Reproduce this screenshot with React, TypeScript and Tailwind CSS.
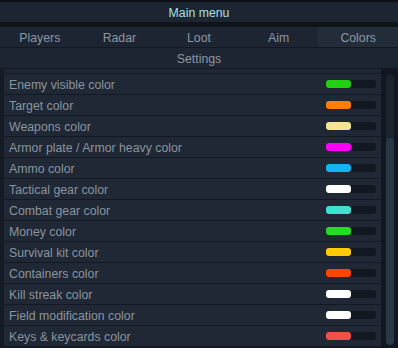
import React from "react";

const tabs = ["Players", "Radar", "Loot", "Aim", "Colors"];

const rows: { label: string; color: string }[] = [
  { label: "", color: "#ff2020" },
  { label: "Enemy visible color", color: "#22d012" },
  { label: "Target color", color: "#ff7f00" },
  { label: "Weapons color", color: "#f3e496" },
  { label: "Armor plate / Armor heavy color", color: "#ff00ff" },
  { label: "Ammo color", color: "#12b4f4" },
  { label: "Tactical gear color", color: "#ffffff" },
  { label: "Combat gear color", color: "#40e0d0" },
  { label: "Money color", color: "#1fe01f" },
  { label: "Survival kit color", color: "#ffcc00" },
  { label: "Containers color", color: "#ff4500" },
  { label: "Kill streak color", color: "#ffffff" },
  { label: "Field modification color", color: "#ffffff" },
  { label: "Keys & keycards color", color: "#ef5048" },
];

export default function App() {
  return (
    <div
      className="w-[398px] h-[348px] overflow-hidden bg-[#0c1016] pt-[2px] flex flex-col text-[12.3px] leading-none"
      style={{ fontFamily: '"Liberation Sans", Arial, sans-serif' }}
    >
      <div className="h-[20px] shrink-0 bg-[#1d2532] flex items-center justify-center pt-[2px] text-[#a6e2e2]">
        Main menu
      </div>
      <div className="h-[5px] shrink-0 bg-[#0f141b]" />
      <div className="h-[21px] shrink-0 bg-[#1d2532] border-b border-[#131922] flex">
        {tabs.map((t) => (
          <div
            key={t}
            className={`flex-1 flex items-center justify-center pt-[2px] text-[#8c97a2] ${
              t === "Colors" ? "bg-[#232c39]" : ""
            }`}
          >
            {t}
          </div>
        ))}
      </div>
      <div className="h-[21px] shrink-0 bg-[#1d2532] border-b border-[#131922] flex items-center justify-center pt-[2px] text-[#8c97a2]">
        Settings
      </div>
      <div className="flex-1 min-h-0 flex bg-[#151b24]">
        <div className="flex-1 min-h-0 overflow-hidden flex flex-col justify-end pl-[4px] pb-[1px]">
          {rows.map((r, i) => (
            <div
              key={i}
              className="h-[21px] shrink-0 bg-[#1f2834] border-b border-[#131922] flex items-center pl-[5px] pr-[5px] pt-[2px] text-[#8a949f]"
            >
              <span className="flex-1">{r.label}</span>
              <div className="w-[50px] h-[8px] -mt-[2px] rounded-[3px] bg-[#121821] flex">
                <div className="w-[25px] h-full rounded-[3px]" style={{ backgroundColor: r.color }} />
              </div>
            </div>
          ))}
        </div>
        <div className="w-[17px] shrink-0 bg-[#111720] flex flex-col pt-[5px] pb-[3px] pl-[5px] pr-[4px]">
          <div className="flex-1 rounded-[4px] bg-[#1b232e] flex flex-col justify-end">
            <div className="h-[207px] rounded-[4px] bg-[#2b3646]" />
          </div>
        </div>
      </div>
    </div>
  );
}
